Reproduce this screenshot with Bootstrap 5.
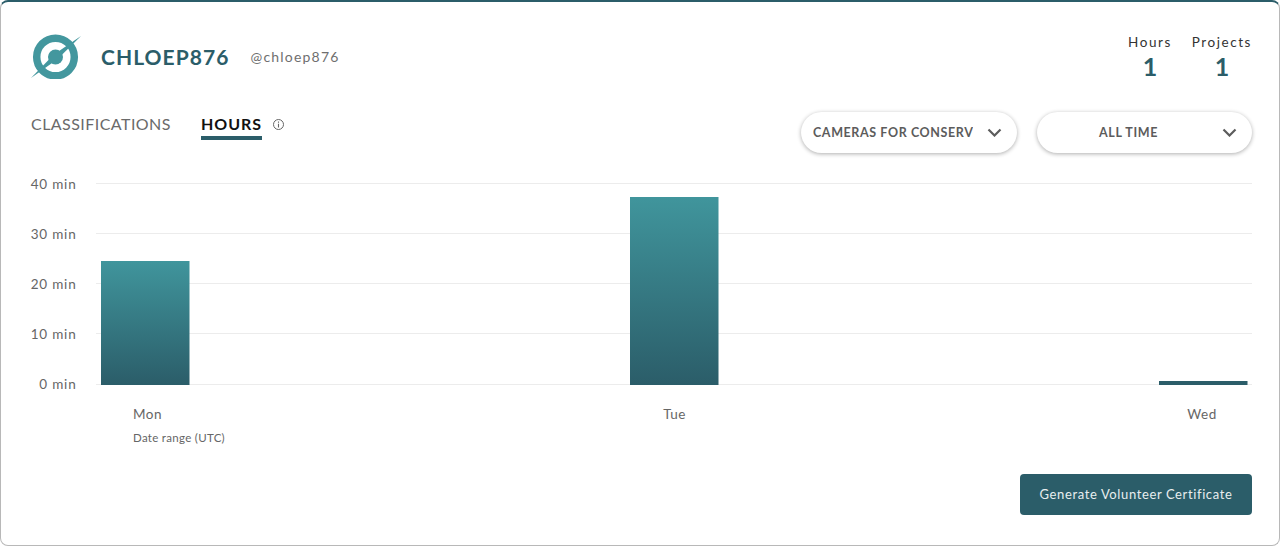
<!DOCTYPE html>
<html lang="en">
<head>
    <meta charset="UTF-8">
    <title>Chloep876 stats</title>
    <link rel="stylesheet" href="https://cdn.jsdelivr.net/npm/bootstrap@5.3.0/dist/css/bootstrap.min.css">
    <style>
        html, body {
            height: 546px;
            overflow: hidden;
        }
        body {
            background: #fff;
            font-family: "Lato", "Liberation Sans", sans-serif;
            color: #5c5c5c;
        }
        .stat-panel {
            height: 546px;
            border: 1px solid #b8b8b8;
            border-top: 2px solid #2b5d69;
            border-radius: 8px;
            padding: 26px 27px 30px 30px;
        }
        .head-row {
            height: 56px;
        }
        .user-name {
            font-size: 21px;
            font-weight: 700;
            letter-spacing: 1.05px;
            color: #2b5d69;
            margin-left: 20px;
            padding-top: 2px;
        }
        .user-login {
            font-size: 14px;
            letter-spacing: 1.2px;
            color: #6f6f6f;
            margin-left: 21px;
        }
        .stat-box {
            text-align: center;
            line-height: 1;
        }
        .stat-label {
            font-size: 13.5px;
            letter-spacing: 1.55px;
            color: #333;
            margin-top: 8px;
        }
        .stat-value {
            font-size: 25px;
            font-weight: 700;
            color: #2b5d69;
            margin-top: 4px;
        }
        .stat-gap {
            gap: 20px;
        }
        .tab-row {
            height: 52px;
            margin-top: 28px;
        }
        .tab-link {
            font-size: 16px;
            letter-spacing: .45px;
            color: #6a6a6a;
            line-height: 24px;
            padding: 0;
            background: none;
            border: 0;
            border-bottom: 4px solid transparent;
            height: 28px;
        }
        .tab-link.on {
            color: #111;
            font-weight: 700;
            letter-spacing: 1px;
            border-bottom-color: #2b5d69;
        }
        .tab-gap {
            margin-right: 30px;
        }
        .info-mark {
            margin: 6px 0 0 10px;
        }
        .pick-gap {
            gap: 20px;
        }
        .pick-btn {
            height: 41px;
            border-radius: 21px;
            background: #fff;
            box-shadow: 0 1px 4px rgba(0, 0, 0, .32);
            font-size: 12.500px;
            font-weight: 700;
            letter-spacing: .6px;
            color: #5c5c5c;
            padding: 0 15px 0 12px;
        }
        .pick-wide {
            width: 215.5px;
        }
        .pick-text {
            width: 160px;
            padding-top: 2px;
            overflow: hidden;
            white-space: nowrap;
        }
        .chart-wrap {
            margin: 6px -27px 0 -31px;
        }
        .chart-wrap svg {
            display: block;
        }
        .chart-wrap text {
            font-family: "Lato", "Liberation Sans", sans-serif;
            fill: #666;
            font-size: 13.5px;
            letter-spacing: .8px;
        }
        .chart-wrap .day-label {
            letter-spacing: .5px;
        }
        .chart-wrap text.range-note {
            font-size: 11.5px;
            letter-spacing: .3px;
        }
        .cert-btn {
            background: #2b5d69;
            color: #e8eeef;
            font-size: 13px;
            letter-spacing: .62px;
            width: 232px;
            height: 41px;
            border-radius: 4px;
            border: 0;
            padding: 0;
        }
        .cert-btn:hover {
            background: #2b5d69;
            color: #fff;
        }
    </style>
</head>
<body>

<div class="stat-panel d-flex flex-column">
    <div class="head-row d-flex justify-content-between">
        <div class="d-flex align-items-center">
            <svg width="50" height="46" viewBox="0 0 50 46" aria-hidden="true">
                <circle cx="24.500" cy="24" r="18.800" fill="none" stroke="#43979e" stroke-width="7.500"/>
                <circle cx="24.500" cy="24" r="7.500" fill="#43979e"/>
                <path d="M0 45 L22.600 21.700 L50 3 L26.400 26.300 Z" fill="#43979e"/>
            </svg>
            <span class="user-name">CHLOEP876</span>
            <span class="user-login">@chloep876</span>
        </div>
        <div class="d-flex stat-gap">
            <div class="stat-box">
                <div class="stat-label">Hours</div>
                <div class="stat-value">1</div>
            </div>
            <div class="stat-box">
                <div class="stat-label">Projects</div>
                <div class="stat-value">1</div>
            </div>
        </div>
    </div>

    <div class="tab-row d-flex justify-content-between align-items-start">
        <div class="d-flex align-items-start">
            <button type="button" class="tab-link tab-gap">CLASSIFICATIONS</button>
            <button type="button" class="tab-link on">HOURS</button>
            <svg class="info-mark" width="13" height="13" viewBox="0 0 13 13" aria-hidden="true">
                <circle cx="6.500" cy="6.500" r="5" fill="none" stroke="#666" stroke-width="1"/>
                <path d="M6.500 5.800V9.500M6.500 3.500V4.700" stroke="#666" stroke-width="1.100"/>
            </svg>
        </div>
        <div class="d-flex pick-gap">
            <div class="pick-btn pick-wide d-flex align-items-center justify-content-between">
                <span class="pick-text">CAMERAS FOR CONSERV</span>
                <svg width="15" height="9" viewBox="0 0 15 9" aria-hidden="true"><path d="M1.500 1.500 7.500 7.500 13.500 1.500" fill="none" stroke="#5c5c5c" stroke-width="2.200"/></svg>
            </div>
            <div class="pick-btn pick-wide d-flex align-items-center justify-content-between">
                <span class="pick-text text-center">ALL TIME</span>
                <svg width="15" height="9" viewBox="0 0 15 9" aria-hidden="true"><path d="M1.500 1.500 7.500 7.500 13.500 1.500" fill="none" stroke="#5c5c5c" stroke-width="2.200"/></svg>
            </div>
        </div>
    </div>

    <div class="chart-wrap">
        <svg width="1280" height="280" viewBox="0 170 1280 280">
            <defs>
                <linearGradient id="barFill" x1="0" y1="0" x2="0" y2="1">
                    <stop offset="0" stop-color="#40959c"/>
                    <stop offset="1" stop-color="#2b5d69"/>
                </linearGradient>
            </defs>
            <g stroke="#ececec" stroke-width="1">
                <line x1="96" x2="1252" y1="183.500" y2="183.500"/>
                <line x1="96" x2="1252" y1="233.500" y2="233.500"/>
                <line x1="96" x2="1252" y1="283.500" y2="283.500"/>
                <line x1="96" x2="1252" y1="333.500" y2="333.500"/>
                <line x1="96" x2="1252" y1="384.500" y2="384.500"/>
            </g>
            <g text-anchor="end">
                <text x="76.500" y="189">40 min</text>
                <text x="76.500" y="239">30 min</text>
                <text x="76.500" y="289">20 min</text>
                <text x="76.500" y="339">10 min</text>
                <text x="76.500" y="389">0 min</text>
            </g>
            <rect x="101" y="261" width="88.500" height="124" fill="url(#barFill)"/>
            <rect x="630" y="197" width="88.500" height="188" fill="url(#barFill)"/>
            <rect x="1159" y="381" width="88.500" height="4" fill="#2b5d69"/>
            <text class="day-label" x="133" y="419">Mon</text>
            <text class="day-label" x="674.500" y="419" text-anchor="middle">Tue</text>
            <text class="day-label" x="1202" y="419" text-anchor="middle">Wed</text>
            <text class="range-note" x="133" y="442">Date range (UTC)</text>
        </svg>
    </div>

    <div class="d-flex justify-content-end mt-auto">
        <button type="button" class="btn cert-btn">Generate Volunteer Certificate</button>
    </div>
</div>

</body>
</html>
